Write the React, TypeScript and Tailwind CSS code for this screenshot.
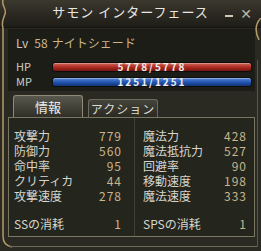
import React from "react";

const font = { fontFamily: '"Noto Sans CJK JP", "DejaVu Sans", sans-serif' };

function Row({ label, value }: { label: string; value: string }) {
  return (
    <div className="flex items-center justify-between h-[15px]">
      <span className="block h-[15px] leading-[15px] overflow-hidden text-[#d6d6ce]">{label}</span>
      <span className="block h-[15px] leading-[15px] overflow-hidden text-[#c9b58c] tracking-[1px]">{value}</span>
    </div>
  );
}

function Bar({ label, value, color }: { label: string; value: string; color: "red" | "blue" }) {
  const bg =
    color === "red"
      ? "bg-gradient-to-b from-[#d0655a] via-[#b02c22] to-[#741510]"
      : "bg-gradient-to-b from-[#5a8ad8] via-[#2457b4] to-[#123276]";
  return (
    <div className="flex items-center h-[15px]">
      <span className="block w-[36px] h-[15px] text-[11px] text-[#cfcfc8] leading-[15px] overflow-hidden">{label}</span>
      <div className={`flex-1 h-[10px] rounded-[3px] ${bg} flex items-center justify-center border border-[#0e0e0c] shadow-[inset_0_1px_0_rgba(255,255,255,0.3)]`}>
        <span className="text-[10px] leading-[10px] text-[#eeeeea] tracking-[2px] font-bold">{value}</span>
      </div>
    </div>
  );
}

export default function App() {
  return (
    <div style={font} className="relative w-[261px] h-[251px] bg-[#2a2a22] overflow-hidden">
      {/* title bar */}
      <div className="h-[28px] bg-gradient-to-b from-[#3b382e] via-[#2c2a22] to-[#1e1d17] flex items-center justify-center relative border-b border-[#15150f]">
        <span className="text-[13px] text-[#e6e6e2] tracking-[1px] leading-[16px] -mt-[4px]">サモン インターフェース</span>
        <div className="absolute right-[9px] top-[5px] flex items-center gap-[7px] text-[#bdb8a4]">
          <span className="block w-[8px] h-[2px] bg-[#cfc9b3] mt-[6px]" />
          <span className="text-[14px] leading-[16px] font-bold">✕</span>
        </div>
      </div>

      {/* left ornament */}
      <svg className="absolute left-0 top-0" width="12" height="251" viewBox="0 0 12 251">
        <path d="M3 0 C1 6 7 8 5 14 C3 20 1 22 3 28 L3 236 C3 243 6 246 12 247" stroke="#b49a6a" strokeWidth="1.5" fill="none" />
      </svg>
      {/* right ornament */}
      <svg className="absolute right-0 top-[18px]" width="8" height="40" viewBox="0 0 8 40">
        <path d="M8 0 C2 6 2 14 6 22" stroke="#b49a6a" strokeWidth="1.5" fill="none" />
      </svg>
      {/* outer frame lines */}
      <div className="absolute left-[10px] right-[3px] top-[246px] h-[1px] bg-[#6e6a58]" />
      <div className="absolute right-[3px] top-[60px] bottom-[4px] w-[1px] bg-[#5a5748]" />

      <div className="pl-[8px] pr-[6px] pt-[1px]">
        {/* info panel */}
        <div className="h-[62px] bg-[#1c1d17] pl-[8px] pr-[3px] pt-[6px]">
          <div className="text-[12px] text-[#c9c9c2] leading-[16px] flex items-center">
            <span>Lv</span>
            <span className="ml-[6px] text-[#c9b58c]">58</span>
            <span className="ml-[4px] text-[#c9b58c]">ナイトシェード</span>
          </div>
          <div className="mt-[8px] flex flex-col">
            <Bar label="HP" value="5778/5778" color="red" />
            <Bar label="MP" value="1251/1251" color="blue" />
          </div>
        </div>

        {/* tabs */}
        <div className="flex items-end h-[26px] pl-[5px] gap-[5px]">
          <div className="w-[70px] h-[22px] rounded-t-[3px] border border-b-0 border-[#8e8a78] bg-gradient-to-b from-[#58584e] to-[#2f2f27] flex items-center justify-center text-[13px] leading-[16px] text-[#eeeee8]">
            情報
          </div>
          <div className="w-[70px] h-[18px] rounded-t-[3px] border border-b-0 border-[#6c6a5c] bg-gradient-to-b from-[#44443b] to-[#2a2a22] flex items-center justify-center text-[12px] leading-[16px] text-[#dcdcd4] tracking-[1px]">
            アクション
          </div>
        </div>

        {/* content */}
        <div className="h-[120px] border border-[#7a7664] bg-[#24251d] grid grid-cols-[126px_1fr] text-[12px]">
          <div className="pl-[5px] pr-[12px] pt-[10px] border-r border-[#3f3f35]">
            <Row label="攻撃力" value="779" />
            <Row label="防御力" value="560" />
            <Row label="命中率" value="95" />
            <Row label="クリティカ" value="44" />
            <Row label="攻撃速度" value="278" />
            <div className="h-[13px]" />
            <Row label="SSの消耗" value="1" />
          </div>
          <div className="pl-[8px] pr-[7px] pt-[10px]">
            <Row label="魔法力" value="428" />
            <Row label="魔法抵抗力" value="527" />
            <Row label="回避率" value="90" />
            <Row label="移動速度" value="198" />
            <Row label="魔法速度" value="333" />
            <div className="h-[13px]" />
            <Row label="SPSの消耗" value="1" />
          </div>
        </div>
      </div>
    </div>
  );
}
